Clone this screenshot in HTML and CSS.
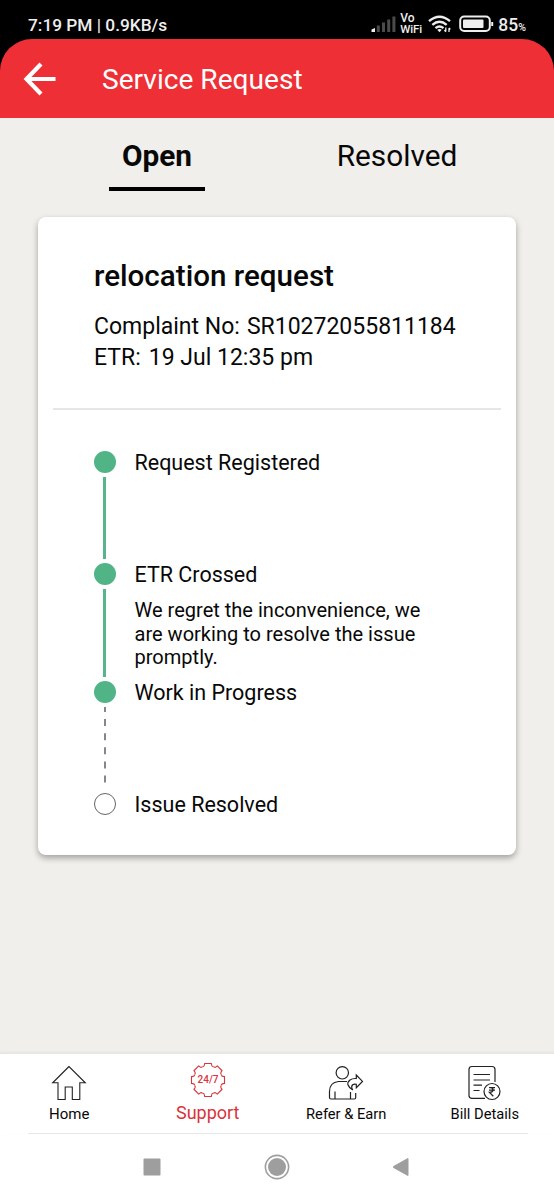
FILE: index.html
```html
<!DOCTYPE html>
<html lang="en">
<head>
<meta charset="utf-8">
<title>Service Request</title>
<link rel="stylesheet" href="styles.css">
</head>
<body>
<div class="status">
  <span class="clock">7:19 PM | 0.9KB/s</span>
  <div class="indicators">
    <svg class="signal" width="26" height="18" viewBox="0 0 26 18"><path d="M0.500 17v-2.500l3.500-1.500V17z" fill="#eee"/><path d="M5.800 17v-6.500h3V17zM11 17V7.500h3V17zM16.200 17V4.500h3V17zM21.400 17V1.500h3V17z" fill="#4b4b4b"/></svg>
    <div class="vowifi"><span>Vo</span><span>WiFi</span></div>
    <svg class="wifi" width="24" height="19" viewBox="0 0 24 19"><g fill="none" stroke="#eee" stroke-width="2.400"><path d="M1 6.200q10.500-8.800 21 0"/><path d="M4.300 9.800q7.200-6 14.400 0"/><path d="M7.500 13.200q4-3.400 8 0"/></g><path d="M9.300 14.800q2.200-1.600 4.400 0L11.500 17.300z" fill="#eee"/><path d="M17.800 12.500v4M16.500 15l1.300 1.800M21 17v-4M22.300 14.500L21 12.800" stroke="#eee" stroke-width="1.300"/></svg>
    <svg class="battery" width="36" height="18" viewBox="0 0 36 18"><rect x="1.200" y="1.500" width="29.600" height="14.500" rx="4" fill="none" stroke="#eee" stroke-width="2"/><rect x="4" y="4.500" width="20.500" height="8.500" rx="1" fill="#eee"/><path d="M33.200 7v4" stroke="#eee" stroke-width="2"/></svg>
    <span class="level">85<small>%</small></span>
  </div>
</div>
<div class="header-wrap">
  <header class="header">
    <svg width="34" height="34" viewBox="0 0 34 34" fill="none" stroke="#fff" stroke-width="4.200"><path d="M32.500 17H4M18 2L3.500 17 18 32"/></svg>
    <h1>Service Request</h1>
  </header>
</div>
<main class="content">
  <nav class="tabs">
    <div class="tab active"><span>Open</span></div>
    <div class="tab"><span>Resolved</span></div>
  </nav>
  <section class="card">
    <div class="summary">
      <h2>relocation request</h2>
      <p class="complaint"><span>Complaint No:</span><span>SR10272055811184</span></p>
      <p class="etr"><span>ETR:</span><span>19 Jul 12:35 pm</span></p>
    </div>
    <ol class="timeline">
      <li class="step one"><i class="dot"></i><i class="line"></i><div><h3>Request Registered</h3></div></li>
      <li class="step two"><i class="dot"></i><i class="line"></i><div><h3>ETR Crossed</h3><p>We regret the inconvenience, we<br>are working to resolve the issue<br>promptly.</p></div></li>
      <li class="step three"><i class="dot"></i><svg class="line dashed" width="2" height="77" viewBox="0 0 2 77"><path d="M1 0v77" stroke="#777a85" stroke-width="1.800" stroke-dasharray="7 7.100" stroke-dashoffset="2"/></svg><div><h3>Work in Progress</h3></div></li>
      <li class="step four"><i class="dot open"></i><div><h3>Issue Resolved</h3></div></li>
    </ol>
  </section>
</main>
<nav class="bottom">
  <div class="item">
    <svg width="36" height="36" viewBox="0 0 36 36" fill="none" stroke="#222" stroke-width="1.100"><path d="M18 1.500L1.700 17.800H7V34.500h7.200V22h7.100v12.500h7.500V17.800h5.500z"/></svg>
    <span class="home">Home</span>
  </div>
  <div class="item selected">
    <svg width="36" height="36" viewBox="-18 -18 36 36" fill="none" stroke="#d9333b" stroke-width="1.100" stroke-linejoin="round"><defs><path id="tooth" d="M-5.500 -13.300Q-3.800 -13.400 -3.600 -15L-3.400 -16.500H3.400L3.600 -15Q3.800 -13.400 5.500 -13.300"/></defs><use href="#tooth"/><use href="#tooth" transform="rotate(45)"/><use href="#tooth" transform="rotate(90)"/><use href="#tooth" transform="rotate(135)"/><use href="#tooth" transform="rotate(180)"/><use href="#tooth" transform="rotate(225)"/><use href="#tooth" transform="rotate(270)"/><use href="#tooth" transform="rotate(315)"/><text class="gear-text" x="0" y="3.300" text-anchor="middle">24/7</text></svg>
    <span class="support">Support</span>
  </div>
  <div class="item">
    <svg width="36" height="36" viewBox="0 0 36 36" fill="none" stroke="#222" stroke-width="1.200"><circle cx="14.300" cy="7.800" r="6.200"/><path d="M19 16.500h-8.500q-9 1-9 10v6q0 1.500 1.500 1.500h23.500q1.200 0 1.200-1.500V28M7 34v-7.500M22.500 34v-7M24.800 25Q16.500 19.500 22 15q2.200-1.700 6.300-1.500V10l6.200 6.400-6.200 6.300v-3.400q-4-.6-4.600 2.200-.3 1.800 1.100 3.500z"/></svg>
    <span class="refer">Refer &amp; Earn</span>
  </div>
  <div class="item">
    <svg class="bill-icon" width="36" height="36" viewBox="0 0 36 36" fill="none" stroke="#222" stroke-width="1.200"><path d="M19 33.400H6q-3 0-3-3V4.500q0-3 3-3h20q3 0 3 3V17M7.500 9.500H24M7.500 15H24M7.500 20.200H16M7.500 25.500h6"/><circle cx="26" cy="26.500" r="8"/><path d="M23 22.700h6M23 25.200h6M23 22.700h1.700q2.300 0 2.300 2.300t-3.500 2.400l3.800 3.800" stroke-width="1.300"/></svg>
    <span class="bill">Bill Details</span>
  </div>
</nav>
<div class="system">
  <svg width="18" height="18"><rect width="17" height="17" x=".5" y=".5" rx="1" fill="#9e9e9e"/></svg>
  <svg width="26" height="26" viewBox="-13 -13 26 26"><circle r="11.600" fill="none" stroke="#9e9e9e" stroke-width="1.600"/><circle r="9" fill="#9e9e9e"/></svg>
  <svg width="18" height="20"><path d="M15 1.500v17L.5 10.500v-1z" fill="#9e9e9e" stroke="#9e9e9e" stroke-linejoin="round"/></svg>
</div>
</body>
</html>
```
FILE: styles.css
```css
* { box-sizing: border-box; margin: 0; padding: 0; }
body { width: 554px; height: 1200px; display: flex; flex-direction: column; overflow: hidden; background: #f0efeb; color: #080808; font-family: Roboto, sans-serif; }
svg { display: block; flex: none; overflow: visible; }
span, h1, h2, h3, p { white-space: nowrap; }
.status { height: 39px; flex: none; background: #000; color: #eee; display: flex; justify-content: space-between; padding: 0 28px; }
.clock { font-size: 17.3px; font-weight: 500; line-height: 20px; padding-top: 15px; }
.indicators { display: flex; align-items: flex-start; padding-top: 15px; }
.vowifi { display: flex; flex-direction: column; margin-left: 3px; margin-top: -2px; font-size: 11.5px; line-height: 11px; font-weight: 500; width: 22px; letter-spacing: -.2px; }
.vowifi span:first-child { font-size: 12px; letter-spacing: 0; }
.wifi { margin-left: 6px; }
.battery { margin-left: 7px; }
.level { margin-left: 3px; font-size: 17.5px; font-weight: 500; line-height: 20px; }
.level small { font-size: 10.5px; }
.header-wrap { flex: none; background: #000; }
.header { height: 79px; background: #ee3036; border-radius: 32px 32px 0 0; display: flex; align-items: center; padding-left: 23px; }
.header h1 { margin-left: 45px; margin-top: 3px; font-size: 28.1px; font-weight: 400; color: #fff; line-height: 34px; }
.content { height: 935px; flex: none; border-top: 1px solid #eeeeef; }
.tabs { display: flex; height: 98px; padding-left: 37px; padding-top: 19px; }
.tab { width: 240px; display: flex; flex-direction: column; align-items: center; font-size: 29.8px; line-height: 36px; }
.tab.active { font-weight: 700; }
.tab.active::after { content: ""; width: 96px; height: 4px; background: #000; margin-top: 13px; }
.card { margin: 0 38px; height: 638px; background: #fff; border-radius: 8px; box-shadow: 0 3px 6px rgba(0,0,0,.33); }
.summary { height: 193px; margin: 0 15px; padding: 42px 0 0 41px; border-bottom: 2px solid #e6e6e6; }
.summary h2 { font-size: 29.6px; line-height: 34px; font-weight: 500; }
.summary p { display: flex; font-size: 23px; line-height: 31px; }
.summary .complaint { margin-top: 17.5px; gap: 7px; }
.etr { gap: 8px; }
.timeline { list-style: none; padding: 41px 0 0 56px; }
.step { display: grid; grid-template-columns: 22px 1fr; grid-template-rows: 22px 1fr; column-gap: 18.5px; }
.step > div { grid-column: 2; grid-row: 1 / 3; }
.dot { width: 22px; height: 22px; border-radius: 50%; background: #50b487; }
.dot.open { background: #fff; border: 1.5px solid #65656c; }
.line { grid-row: 2; width: 3px; margin: 4px 0 4px 9px; background: #57b48b; }
.line.dashed { width: 2px; margin-left: 10px; background: none; }
.step h3 { font-size: 21.5px; line-height: 24px; font-weight: 400; }
.step p { font-size: 20.05px; line-height: 23.7px; margin-top: 12px; }
.one, .three { height: 112px; }
.two { height: 118px; }
.bottom { height: 81px; flex: none; background: #fff; display: flex; border-top: 1px solid #e7e6e3; box-shadow: 0 -1px 2px #e4e3df; position: relative; }
.bottom::after { content: ""; position: absolute; left: 28px; right: 26px; bottom: 0; height: 1px; background: #e8e8e8; }
.item { flex: 1; display: flex; flex-direction: column; align-items: center; padding-top: 11px; font-size: 14.7px; line-height: 18px; }
.item span { margin-top: 4px; }
.item .home { font-size: 15px; }
.bill-icon { margin-left: -2px; }
.selected { color: #d9333b; padding-top: 8px; font-size: 18px; }
.selected .support { margin-top: 6px; }
.gear-text { font-size: 10px; font-weight: 500; fill: #d9333b; stroke: none; }
.system { flex: 1; background: #fff; display: grid; grid-template-columns: 18px 26px 18px; column-gap: 103px; align-items: center; justify-content: center; padding-bottom: 1px; }
```
